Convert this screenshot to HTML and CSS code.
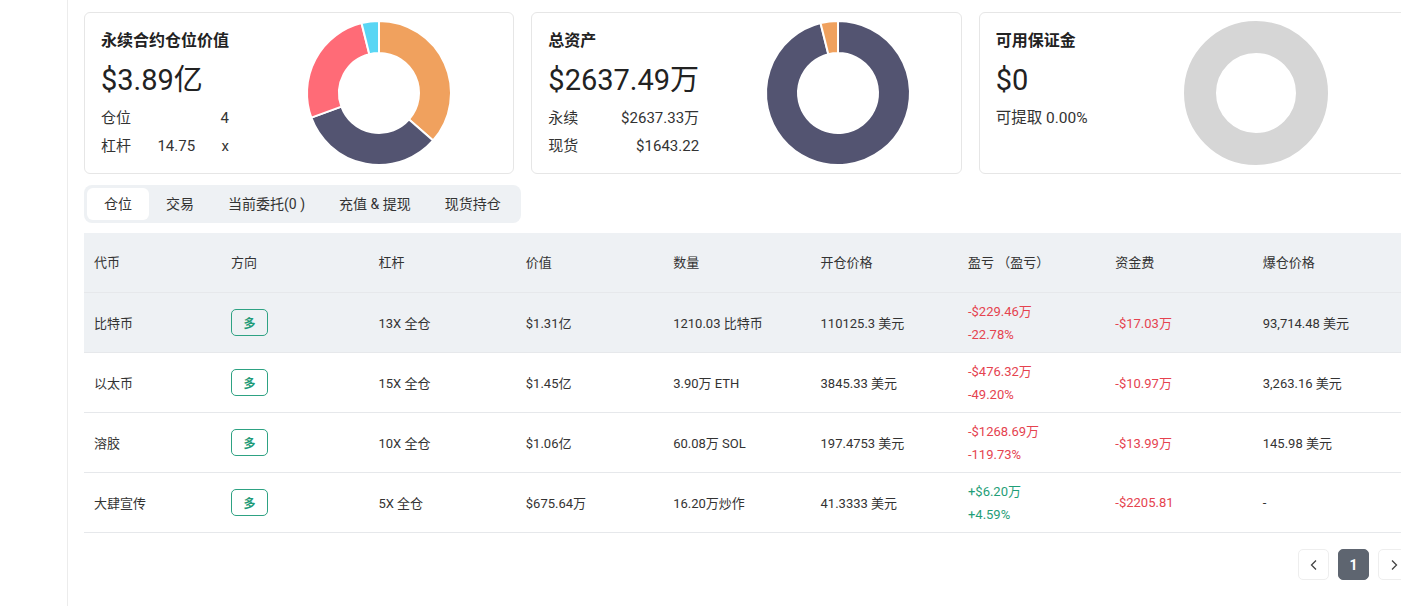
FILE: index.html
```html
<!DOCTYPE html>
<html lang="zh-CN">
<head>
<meta charset="utf-8">
<title>资产概览</title>
<link rel="stylesheet" href="styles.css">
</head>
<body>
<div class="layout">
  <aside class="sidebar"></aside>
  <main class="main">
    <section class="cards">
      <div class="card">
        <div class="card-info">
          <div class="card-title">永续合约仓位价值</div>
          <div class="card-value">$3.89亿</div>
          <div class="kv"><span>仓位</span><span>4</span></div>
          <div class="kv"><span>杠杆</span><span>14.75</span><span>x</span></div>
        </div>
        <div class="chart">
          <svg width="160" height="160" viewBox="-80 -80 160 160">
            <g stroke="#fff" stroke-width="2" stroke-linejoin="round">
              <path fill="#f0a15e" d="M0,-72 A72,72 0 0 1 54.09,47.52 L30.05,26.40 A40,40 0 0 0 0,-40 Z"/>
              <path fill="#535471" d="M54.09,47.52 A72,72 0 0 1 -67.66,24.62 L-37.59,13.68 A40,40 0 0 0 30.05,26.40 Z"/>
              <path fill="#ff6b77" d="M-67.66,24.62 A72,72 0 0 1 -17.42,-69.86 L-9.68,-38.81 A40,40 0 0 0 -37.59,13.68 Z"/>
              <path fill="#59d6f4" d="M-17.42,-69.86 A72,72 0 0 1 0,-72 L0,-40 A40,40 0 0 0 -9.68,-38.81 Z"/>
            </g>
          </svg>
        </div>
      </div>
      <div class="card">
        <div class="card-info">
          <div class="card-title">总资产</div>
          <div class="card-value">$2637.49万</div>
          <div class="kv"><span>永续</span><span>$2637.33万</span></div>
          <div class="kv"><span>现货</span><span>$1643.22</span></div>
        </div>
        <div class="chart">
          <svg width="160" height="160" viewBox="-80 -80 160 160">
            <g stroke="#fff" stroke-width="2" stroke-linejoin="round">
              <path fill="#535471" d="M0,-72 A72,72 0 1 1 -17.42,-69.86 L-9.68,-38.81 A40,40 0 1 0 0,-40 Z"/>
              <path fill="#f0a15e" d="M-17.42,-69.86 A72,72 0 0 1 0,-72 L0,-40 A40,40 0 0 0 -9.68,-38.81 Z"/>
            </g>
          </svg>
        </div>
      </div>
      <div class="card">
        <div class="card-info">
          <div class="card-title">可用保证金</div>
          <div class="card-value">$0</div>
          <div class="kv-line">可提取 0.00%</div>
        </div>
        <div class="chart">
          <svg width="160" height="160" viewBox="-80 -80 160 160">
            <circle cx="0" cy="0" r="56" fill="none" stroke="#d6d6d6" stroke-width="32"/>
          </svg>
        </div>
      </div>
    </section>

    <nav class="tabs">
      <span class="tab active">仓位</span>
      <span class="tab">交易</span>
      <span class="tab">当前委托(0 )</span>
      <span class="tab">充值 &amp; 提现</span>
      <span class="tab">现货持仓</span>
    </nav>

    <section class="table">
      <div class="row head">
        <div class="cell">代币</div>
        <div class="cell">方向</div>
        <div class="cell">杠杆</div>
        <div class="cell">价值</div>
        <div class="cell">数量</div>
        <div class="cell">开仓价格</div>
        <div class="cell">盈亏 （盈亏）</div>
        <div class="cell">资金费</div>
        <div class="cell">爆仓价格</div>
      </div>
      <div class="row hover">
        <div class="cell">比特币</div>
        <div class="cell"><span class="badge">多</span></div>
        <div class="cell">13X 全仓</div>
        <div class="cell">$1.31亿</div>
        <div class="cell">1210.03 比特币</div>
        <div class="cell">110125.3 美元</div>
        <div class="cell pnl red"><span>-$229.46万</span><span>-22.78%</span></div>
        <div class="cell red">-$17.03万</div>
        <div class="cell">93,714.48 美元</div>
      </div>
      <div class="row">
        <div class="cell">以太币</div>
        <div class="cell"><span class="badge">多</span></div>
        <div class="cell">15X 全仓</div>
        <div class="cell">$1.45亿</div>
        <div class="cell">3.90万 ETH</div>
        <div class="cell">3845.33 美元</div>
        <div class="cell pnl red"><span>-$476.32万</span><span>-49.20%</span></div>
        <div class="cell red">-$10.97万</div>
        <div class="cell">3,263.16 美元</div>
      </div>
      <div class="row">
        <div class="cell">溶胶</div>
        <div class="cell"><span class="badge">多</span></div>
        <div class="cell">10X 全仓</div>
        <div class="cell">$1.06亿</div>
        <div class="cell">60.08万 SOL</div>
        <div class="cell">197.4753 美元</div>
        <div class="cell pnl red"><span>-$1268.69万</span><span>-119.73%</span></div>
        <div class="cell red">-$13.99万</div>
        <div class="cell">145.98 美元</div>
      </div>
      <div class="row">
        <div class="cell">大肆宣传</div>
        <div class="cell"><span class="badge">多</span></div>
        <div class="cell">5X 全仓</div>
        <div class="cell">$675.64万</div>
        <div class="cell">16.20万炒作</div>
        <div class="cell">41.3333 美元</div>
        <div class="cell pnl green"><span>+$6.20万</span><span>+4.59%</span></div>
        <div class="cell red">-$2205.81</div>
        <div class="cell">-</div>
      </div>
    </section>

    <div class="pager">
      <span class="pg-btn">
        <svg width="10" height="12" viewBox="0 0 10 12"><path d="M7 1.5 L2.5 6 L7 10.5" fill="none" stroke="#444" stroke-width="1.3"/></svg>
      </span>
      <span class="pg-btn current">1</span>
      <span class="pg-btn">
        <svg width="10" height="12" viewBox="0 0 10 12"><path d="M3 1.5 L7.5 6 L3 10.5" fill="none" stroke="#444" stroke-width="1.3"/></svg>
      </span>
    </div>
  </main>
</div>
</body>
</html>
```

FILE: styles.css
```css
html, body {
  margin: 0;
  padding: 0;
  overflow: hidden;
  background: #fff;
}
body {
  font-family: Roboto, "Noto Sans CJK SC", sans-serif;
  color: #333;
  width: 1401px;
  height: 606px;
}
.layout {
  display: flex;
  height: 606px;
}
.sidebar {
  flex: 0 0 67px;
  border-right: 1px solid #ececec;
  background: #fff;
}
.main {
  flex: 0 0 1325px;
  width: 1325px;
  padding: 12px 0 0 16px;
}
.cards {
  display: flex;
  gap: 17px;
}
.card {
  flex: 1;
  display: flex;
  height: 162px;
  box-sizing: border-box;
  border: 1px solid #e6e6e6;
  border-radius: 6px;
  background: #fff;
}
.card-info {
  padding: 17px 0 0 16px;
  display: flex;
  flex-direction: column;
}
.card-title {
  font-size: 16px;
  line-height: 22px;
  font-weight: 700;
  color: #222;
  margin-bottom: 8px;
}
.card-value {
  font-size: 29px;
  line-height: 40px;
  color: #222;
  margin-bottom: 4px;
}
.kv {
  display: flex;
  justify-content: space-between;
  font-size: 15px;
  line-height: 28px;
  color: #333;
}
.kv-line {
  font-size: 15.5px;
  line-height: 28px;
  color: #333;
}
.chart {
  flex: 1;
  display: flex;
  justify-content: center;
  align-items: center;
  margin: 0 16px 0 32px;
}
.tabs {
  display: inline-flex;
  margin-top: 11px;
  padding: 3px;
  background: #eef1f4;
  border-radius: 8px;
}
.tab {
  font-size: 14px;
  line-height: 32px;
  padding: 0 17px;
  color: #333;
  border-radius: 6px;
}
.tab.active {
  background: #fff;
}
.table {
  margin-top: 10px;
  width: 1325px;
}
.row {
  display: grid;
  grid-template-columns: 137px repeat(7, 147.4px) 1fr;
  align-items: center;
  height: 60px;
  box-sizing: border-box;
  border-bottom: 1px solid #e6e8eb;
  font-size: 13px;
  color: #333;
}
.row.head {
  background: #eef1f4;
  padding-bottom: 2px;
}
.row.hover {
  background: #eef1f4;
}
.cell {
  padding-left: 10px;
  white-space: nowrap;
}
.badge {
  display: inline-flex;
  align-items: center;
  justify-content: center;
  width: 37px;
  height: 27px;
  box-sizing: border-box;
  border: 1px solid #2ea283;
  border-radius: 5px;
  color: #1f9b78;
  font-size: 12px;
  font-weight: 700;
}
.pnl {
  display: flex;
  flex-direction: column;
  line-height: 23px;
}
.red {
  color: #e5434f;
}
.green {
  color: #1f9e78;
}
.pager {
  display: flex;
  justify-content: flex-end;
  gap: 9px;
  margin-top: 16px;
}
.pg-btn {
  width: 31px;
  height: 31px;
  box-sizing: border-box;
  display: flex;
  align-items: center;
  justify-content: center;
  border: 1px solid #eeeeee;
  border-radius: 5px;
  background: #fff;
  font-size: 14px;
}
.pg-btn.current {
  background: #5e6570;
  border-color: #5e6570;
  color: #fff;
  font-weight: 700;
}
```
